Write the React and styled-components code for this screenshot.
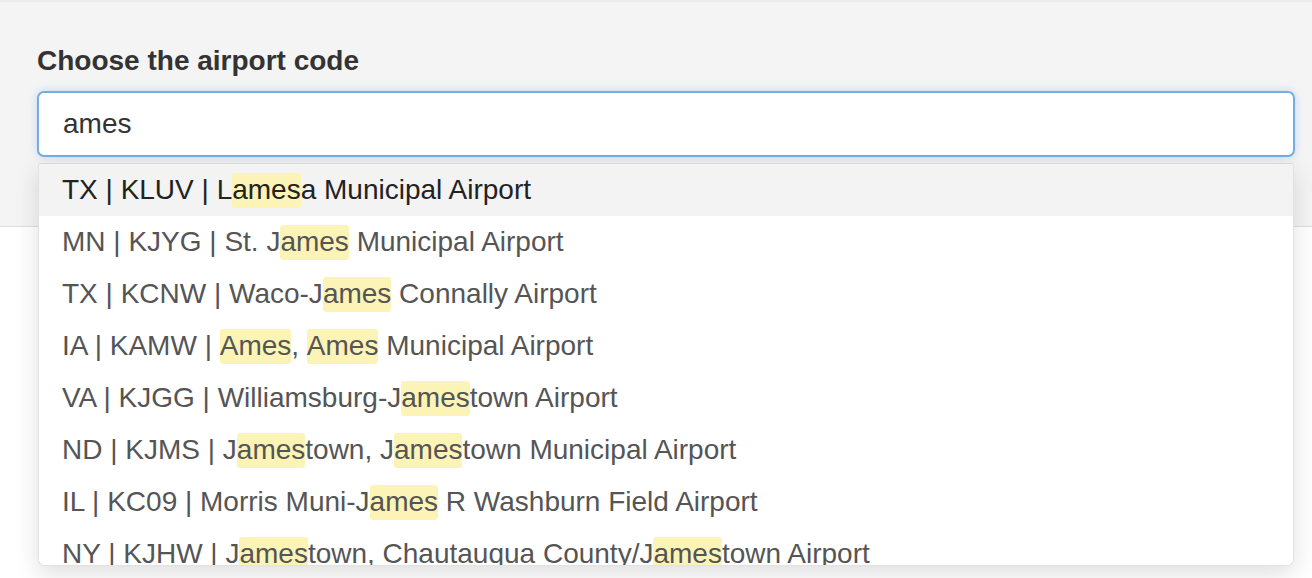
import { createGlobalStyle, styled } from 'styled-components';

const GlobalStyle = createGlobalStyle`
  html, body {
    margin: 0;
    padding: 0;
    background: #ffffff;
    font-family: "Liberation Sans", Arial, sans-serif;
  }
`;

const query = 'ames';

const airports = [
  { state: 'TX', code: 'KLUV', name: 'Lamesa Municipal Airport' },
  { state: 'MN', code: 'KJYG', name: 'St. James Municipal Airport' },
  { state: 'TX', code: 'KCNW', name: 'Waco-James Connally Airport' },
  { state: 'IA', code: 'KAMW', name: 'Ames, Ames Municipal Airport' },
  { state: 'VA', code: 'KJGG', name: 'Williamsburg-Jamestown Airport' },
  { state: 'ND', code: 'KJMS', name: 'Jamestown, Jamestown Municipal Airport' },
  { state: 'IL', code: 'KC09', name: 'Morris Muni-James R Washburn Field Airport' },
  { state: 'NY', code: 'KJHW', name: 'Jamestown, Chautauqua County/Jamestown Airport' },
  { state: 'OH', code: 'KAMS', name: 'Sames Field Airport' },
];

const highlight = (text) => {
  const parts = [];
  const lower = text.toLowerCase();
  let i = 0;
  while (i < text.length) {
    const at = lower.indexOf(query, i);
    if (at === -1) {
      parts.push(text.slice(i));
      break;
    }
    if (at > i) parts.push(text.slice(i, at));
    parts.push(<Mark key={at}>{text.slice(at, at + query.length)}</Mark>);
    i = at + query.length;
  }
  return parts;
};

const App = () => (
  <Page>
    <GlobalStyle />
    <Panel>
      <Label>Choose the airport code</Label>
      <Field>
        <Input value={query} readOnly />
        <Dropdown>
          {airports.map((item, idx) => (
            <Option key={item.code} $active={idx === 0}>
              {item.state} | {item.code} | {highlight(item.name)}
            </Option>
          ))}
        </Dropdown>
      </Field>
    </Panel>
  </Page>
);

export default App;

const Page = styled.div`
  min-height: 578px;
  background: #ffffff;
`;

const Panel = styled.div`
  box-sizing: border-box;
  height: 227px;
  padding: 43px 17px 0 37px;
  background: #f4f4f4;
  border-top: 2px solid #ebebeb;
  border-bottom: 1px solid #dddddd;
`;

const Label = styled.div`
  font-size: 28px;
  line-height: 32px;
  font-weight: bold;
  color: #333333;
  margin-bottom: 14px;
`;

const Field = styled.div`
  position: relative;
  z-index: 1;
`;

const Input = styled.input`
  box-sizing: border-box;
  display: block;
  width: 100%;
  height: 66px;
  padding: 0 24px;
  font-family: "Liberation Sans", Arial, sans-serif;
  font-size: 28px;
  color: #333333;
  background: #ffffff;
  border: 2px solid #74ade3;
  border-radius: 7px;
  box-shadow: 0 0 8px rgba(102, 160, 220, 0.35);
  outline: none;
`;

const Dropdown = styled.div`
  position: absolute;
  top: 72px;
  left: 1px;
  right: 1px;
  height: 401px;
  overflow: hidden;
  background: #ffffff;
  border: 1px solid #e2e2e2;
  border-top-color: #d8d8d8;
  border-radius: 3px 3px 7px 7px;
  box-shadow: 0 8px 24px rgba(0, 0, 0, 0.13);
`;

const Option = styled.div`
  height: 52px;
  display: flex;
  align-items: center;
  padding: 0 23px;
  white-space: pre;
  font-size: 28px;
  color: ${({ $active }) => ($active ? '#222222' : '#555555')};
  background: ${({ $active }) => ($active ? '#f3f3f3' : '#ffffff')};
`;

const Mark = styled.span`
  background: #fcf4b6;
  border-radius: 3px;
  padding: 1px 0 2px;
`;
